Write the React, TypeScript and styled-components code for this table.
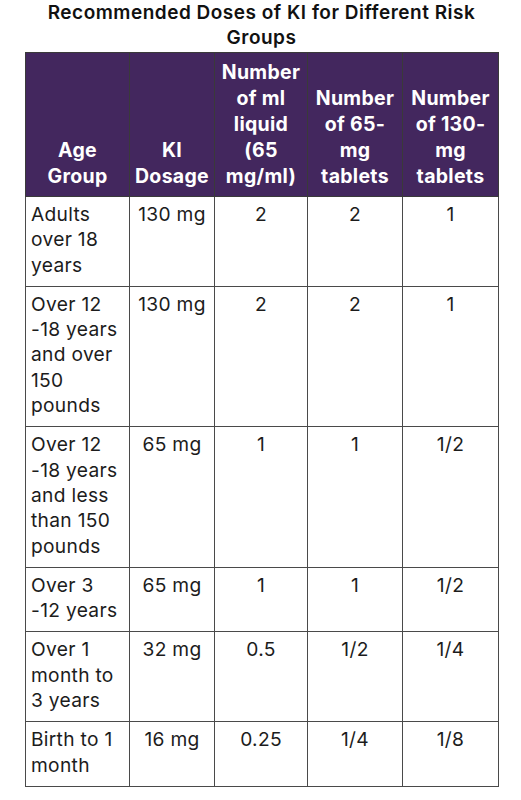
import React from "react";
import styled, { createGlobalStyle } from "styled-components";

const Global = createGlobalStyle`
  html, body { margin: 0; padding: 0; background: #fff; }
  body { font-family: "Inter", "Liberation Sans", sans-serif; color: #1a1a1a; }
`;

const Page = styled.div`
  width: 521px;
  padding: 0 23px 0 25px;
  box-sizing: border-box;
`;

const Title = styled.h1`
  margin: 0;
  font-size: 19px;
  letter-spacing: 0.5px;
  line-height: 25px;
  font-weight: 600;
  text-align: center;
  color: #111;
  height: 52px;
  box-sizing: border-box;
  padding-top: 0px;
`;

const Table = styled.table`
  width: 473px;
  border-collapse: collapse;
  table-layout: fixed;
  font-size: 19.2px;
  letter-spacing: 0.3px;
`;

const HeadCell = styled.th`
  background: #43275e;
  color: #fff;
  font-weight: 700;
  font-size: 19.5px;
  line-height: 26px;
  vertical-align: bottom;
  text-align: center;
  padding: 6px 1px 7px;
  border: 1.5px solid #3a3a3a;
`;

const Cell = styled.td<{ $left?: boolean }>`
  vertical-align: top;
  text-align: ${(p) => (p.$left ? "left" : "center")};
  line-height: 25.3px;
  padding: 5px 2px 8px ${(p) => (p.$left ? "5px" : "2px")};
  border: 1.5px solid #4a4a4a;
  color: #1c1c1c;
`;

const widths = [104, 85, 93, 95, 96];

const headers: string[][] = [
  ["Age", "Group"],
  ["KI", "Dosage"],
  ["Number", "of ml", "liquid", "(65", "mg/ml)"],
  ["Number", "of 65-", "mg", "tablets"],
  ["Number", "of 130-", "mg", "tablets"],
];

const rows: string[][][] = [
  [["Adults", "over 18", "years"], ["130 mg"], ["2"], ["2"], ["1"]],
  [["Over 12", "-18 years", "and over", "150", "pounds"], ["130 mg"], ["2"], ["2"], ["1"]],
  [["Over 12", "-18 years", "and less", "than 150", "pounds"], ["65 mg"], ["1"], ["1"], ["1/2"]],
  [["Over 3", "-12 years"], ["65 mg"], ["1"], ["1"], ["1/2"]],
  [["Over 1", "month to", "3 years"], ["32 mg"], ["0.5"], ["1/2"], ["1/4"]],
  [["Birth to 1", "month"], ["16 mg"], ["0.25"], ["1/4"], ["1/8"]],
];

const Lines = ({ lines }: { lines: string[] }) => (
  <>
    {lines.map((l, i) => (
      <React.Fragment key={i}>
        {i > 0 && <br />}
        {l}
      </React.Fragment>
    ))}
  </>
);

export default function App() {
  return (
    <Page>
      <Global />
      <Title>
        Recommended Doses of KI for Different Risk
        <br />
        Groups
      </Title>
      <Table>
        <colgroup>
          {widths.map((w, i) => (
            <col key={i} style={{ width: w }} />
          ))}
        </colgroup>
        <thead>
          <tr>
            {headers.map((h, i) => (
              <HeadCell key={i}>
                <Lines lines={h} />
              </HeadCell>
            ))}
          </tr>
        </thead>
        <tbody>
          {rows.map((r, ri) => (
            <tr key={ri}>
              {r.map((c, ci) => (
                <Cell key={ci} $left={ci === 0}>
                  <Lines lines={c} />
                </Cell>
              ))}
            </tr>
          ))}
        </tbody>
      </Table>
    </Page>
  );
}
